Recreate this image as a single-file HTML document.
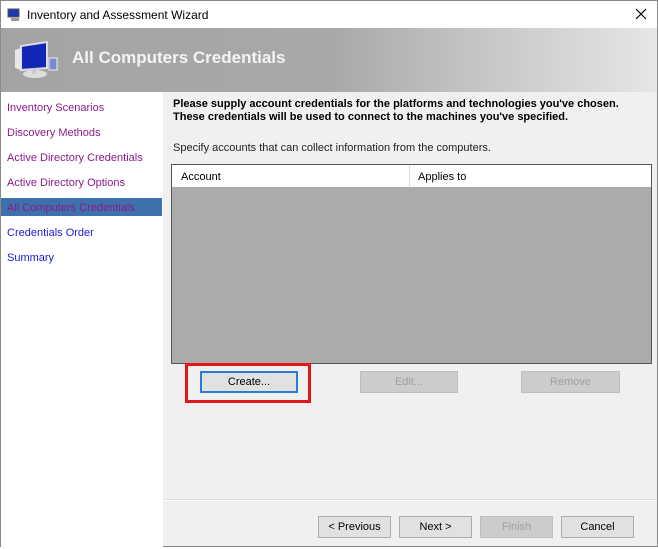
<!DOCTYPE html>
<html><head><style>
*{margin:0;padding:0;box-sizing:border-box}
body{width:658px;height:549px;background:#fff;position:relative;overflow:hidden;font-family:"Liberation Sans",sans-serif;font-size:11px}
.win{position:absolute;left:0;top:0;width:658px;height:547px;border:1px solid #8a8a8a;background:#f0f0f0}
.title{position:absolute;left:0;top:0;width:656px;height:27px;background:#fff}
.title span{position:absolute;left:26px;top:7px;font-size:12px;color:#000}
.hdr{position:absolute;left:0;top:27px;width:656px;height:64px;background:linear-gradient(90deg,#a4a4a4 0%,#a8a8a8 50%,#c8c8c8 75%,#e6e6e6 100%)}
.hdr b{position:absolute;left:71px;top:20px;font-size:17px;color:#f4f4f4}
.nav{position:absolute;left:0;top:91px;width:162px;height:455px;background:#fff}
.nav div{position:absolute;left:6px;font-size:11px;color:#8b1a8b}
.sel{position:absolute;left:1px;top:197px;width:161px;height:18px;background:#3d70ad}
.abs{position:absolute}
.btn{position:absolute;height:22px;border:1px solid #adadad;background:#e1e1e1;text-align:center;line-height:20px;font-size:11px;color:#000}
.dis{color:#a0a0a0;background:#cccccc;border-color:#bfbfbf}
</style></head><body>
<div class="win">
<div class="title">
<svg class="abs" style="left:6px;top:7px" width="16" height="14"><rect x="1" y="1" width="11" height="8" fill="#1a3aa8" stroke="#555"/><rect x="4" y="10" width="8" height="3" fill="#999"/></svg>
<span>Inventory and Assessment Wizard</span>
<svg class="abs" style="left:634px;top:7px" width="12" height="12"><path d="M1 1L11 11M11 1L1 11" stroke="#000" stroke-width="1.2"/></svg>
</div>
<div class="hdr">
<svg class="abs" style="left:12px;top:12px" width="46" height="40"><path d="M8 6L34 2L34 28L8 30Z" fill="#1426b8" stroke="#ddd" stroke-width="2"/><path d="M2 10L8 8L8 30L2 28Z" fill="#e8e8e8"/><ellipse cx="22" cy="34" rx="12" ry="4" fill="#ddd"/><rect x="19" y="28" width="4" height="6" fill="#ccc"/><rect x="36" y="18" width="8" height="12" fill="#7b8bd0" stroke="#eee"/></svg>
<b>All Computers Credentials</b>
</div>
<div class="nav">
<div class="sel" style="left:0;top:106px;"></div>
<div style="top:10px">Inventory Scenarios</div>
<div style="top:35px">Discovery Methods</div>
<div style="top:60px">Active Directory Credentials</div>
<div style="top:85px">Active Directory Options</div>
<div style="top:110px">All Computers Credentials</div>
<div style="top:135px;color:#1a1ae0">Credentials Order</div>
<div style="top:160px;color:#1a1ae0">Summary</div>
</div>
<div class="abs" style="left:172px;top:97px;font-weight:bold;font-size:11px;line-height:13px;color:#000">Please supply account credentials for the platforms and technologies you've chosen.<br>These credentials will be used to connect to the machines you've specified.</div>
<div class="abs" style="left:172px;top:141px;font-size:11px;color:#222">Specify accounts that can collect information from the computers.</div>
<div class="abs" style="left:170px;top:163px;width:481px;height:200px;border:1px solid #555;background:#ababab">
<div class="abs" style="left:0;top:0;width:479px;height:22px;background:#fff"></div>
<div class="abs" style="left:237px;top:0;width:1px;height:22px;background:#ddd"></div>
<span class="abs" style="left:9px;top:6px">Account</span>
<span class="abs" style="left:246px;top:6px">Applies to</span>
</div>
<div class="abs" style="left:184px;top:362px;width:126px;height:40px;border:3px solid #e5161b"></div>
<div class="btn" style="left:199px;top:370px;width:98px;border:2px solid #2b7bd6;line-height:18px">Create...</div>
<div class="btn dis" style="left:359px;top:370px;width:98px">Edit...</div>
<div class="btn dis" style="left:520px;top:370px;width:99px">Remove</div>
<div class="abs" style="left:164px;top:499px;width:492px;height:1px;background:#fff"></div>
<div class="abs" style="left:164px;top:498px;width:492px;height:1px;background:#ddd"></div>
<div class="btn" style="left:317px;top:515px;width:73px">&lt; Previous</div>
<div class="btn" style="left:398px;top:515px;width:73px">Next &gt;</div>
<div class="btn dis" style="left:479px;top:515px;width:73px">Finish</div>
<div class="btn" style="left:560px;top:515px;width:73px">Cancel</div>
</div>
</body></html>
